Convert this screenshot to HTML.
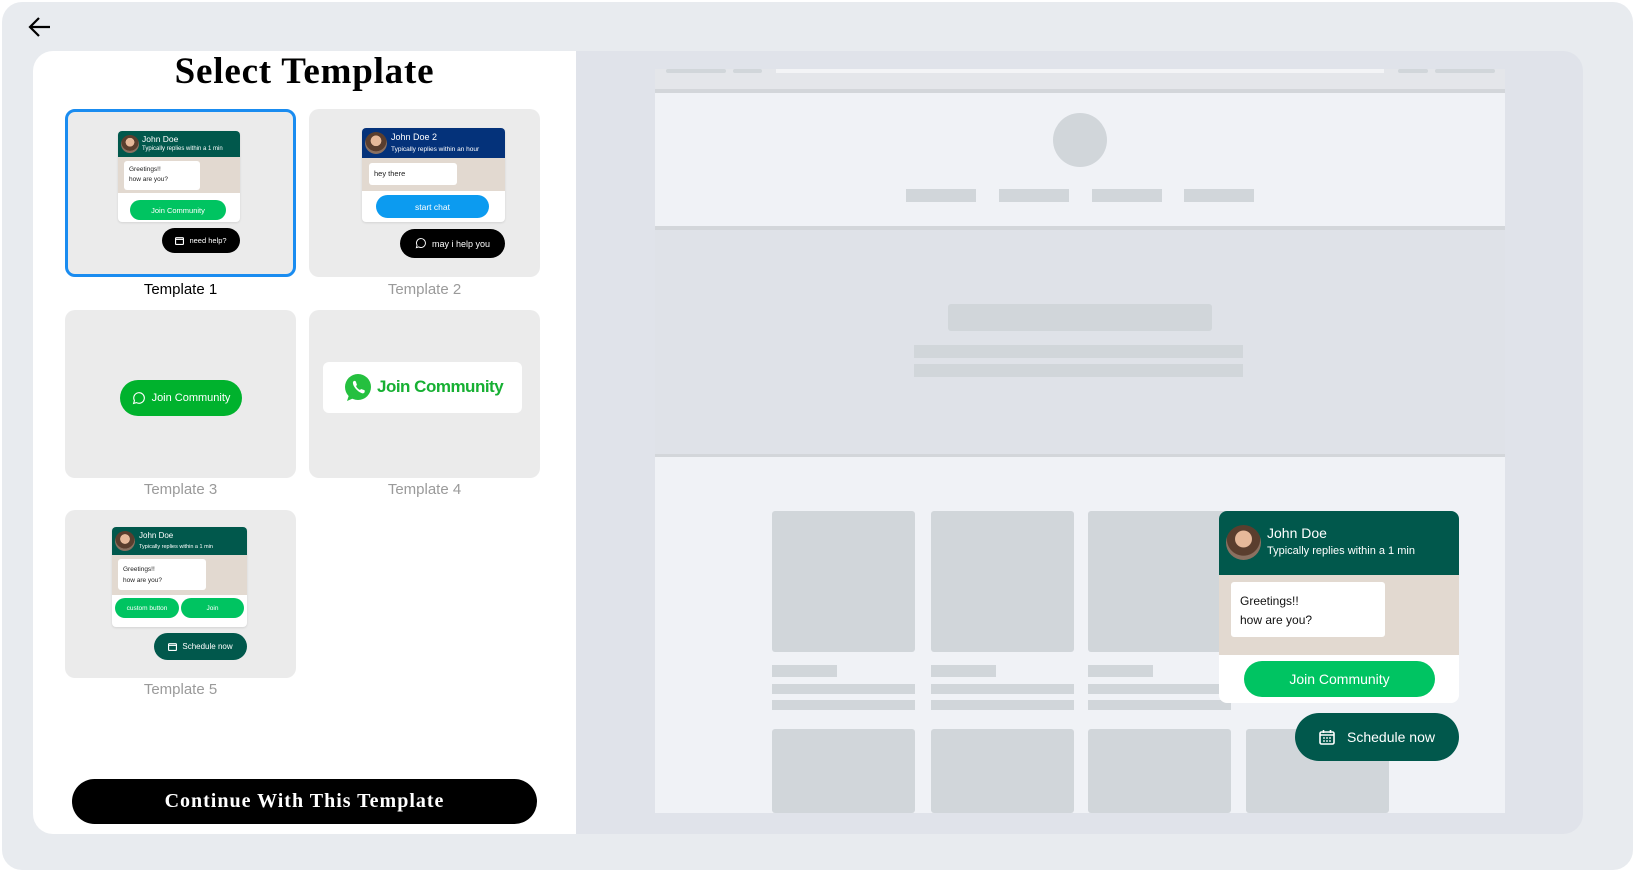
<!DOCTYPE html>
<html><head><meta charset="utf-8"><style>
*{box-sizing:border-box;margin:0;padding:0}
body{width:1635px;height:872px;background:#fff;font-family:"Liberation Sans",sans-serif;position:relative;overflow:hidden}
.a{position:absolute}
.frame{left:2px;top:2px;width:1631px;height:868px;background:#e8ebef;border-radius:20px}
.left{left:33px;top:51px;width:543px;height:783px;background:#fff;border-radius:20px 0 0 20px}
.right{left:576px;top:51px;width:1007px;height:783px;background:#e0e3ea;border-radius:0 20px 20px 0}
.title{left:33px;width:543px;top:50px;text-align:center;font-family:"Liberation Serif",serif;font-weight:bold;font-size:37px;letter-spacing:0.8px;color:#000}
.card{width:231px;height:168px;background:#ebebeb;border-radius:10px}
.sel{border:3px solid #1a8cf0}
.lbl{width:231px;text-align:center;font-size:15px;color:#9a9a9a}
.w{background:#fff;border-radius:4px;overflow:hidden;box-shadow:0 1px 2px rgba(0,0,0,.1)}
.hd{background:#01584c;color:#fff;position:relative}
.av{position:absolute;border-radius:50%;background:radial-gradient(circle at 50% 40%,#e6b99a 0 30%,#5a3e2e 32% 60%,#8a7060 62%)}
.chat{background:#e2d9d0;position:relative}
.bub{position:absolute;background:#fff;border-radius:3px;color:#222}
.pill{position:absolute;border-radius:999px;color:#fff;text-align:center;display:flex;align-items:center;justify-content:center}
.g{background:#d1d6da}
</style></head><body>
<div class="a frame"></div>
<svg class="a" style="left:27px;top:15px" width="26" height="24" viewBox="0 0 26 24"><path d="M23 12H4M12 3L3 12l9 9" fill="none" stroke="#000" stroke-width="2.2"/></svg>
<div class="a left"></div>
<div class="a right"></div>
<div class="a title">Select Template</div>

<!-- card 1 -->
<div class="a card sel" style="left:65px;top:109px"></div>
<div class="a w" style="left:118px;top:131px;width:122px;height:91px">
 <div class="hd" style="height:26px"><div class="av" style="left:3px;top:4px;width:18px;height:18px"></div>
 <div class="a" style="left:24px;top:3px;font-size:8.5px">John Doe</div><div class="a" style="left:24px;top:15px;font-size:6px">Typically replies within a 1 min</div></div>
 <div class="chat" style="height:36px"><div class="bub" style="left:6px;top:4px;width:76px;height:29px;font-size:6.5px;padding:4px 5px;line-height:10px">Greetings!!<br>how are you?</div></div>
 <div class="pill" style="left:12px;top:69px;width:96px;height:20px;background:#00c461;font-size:7.5px">Join Community</div>
</div>
<div class="a pill" style="left:162px;top:228px;width:78px;height:25px;background:#000;font-size:7.5px"><svg width="9" height="9" viewBox="0 0 16 16" style="margin-right:5px"><rect x="1" y="3" width="14" height="12" rx="1.5" fill="none" stroke="#fff" stroke-width="2"/><path d="M1 6h14" stroke="#fff" stroke-width="2"/></svg>need help?</div>
<div class="a lbl" style="left:65px;top:281px;color:#000">Template 1</div>

<!-- card 2 -->
<div class="a card" style="left:309px;top:109px"></div>
<div class="a w" style="left:362px;top:128px;width:143px;height:94px">
 <div class="hd" style="height:30px;background:#04327a"><div class="av" style="left:3px;top:4px;width:22px;height:22px"></div>
 <div class="a" style="left:29px;top:4px;font-size:9px">John Doe 2</div><div class="a" style="left:29px;top:18px;font-size:6.5px">Typically replies within an hour</div></div>
 <div class="chat" style="height:33px"><div class="bub" style="left:7px;top:5px;width:88px;height:22px;font-size:7.5px;padding:6px 5px">hey there</div></div>
 <div class="pill" style="left:14px;top:67px;width:113px;height:23px;background:#0c9bf0;font-size:8.5px">start chat</div>
</div>
<div class="a pill" style="left:400px;top:229px;width:105px;height:29px;background:#000;font-size:9px"><svg width="11" height="11" viewBox="0 0 16 16" style="margin-right:6px"><path d="M2 14l1-3.5A6.5 6.5 0 1 1 5.5 13z" fill="none" stroke="#fff" stroke-width="1.4"/></svg>may i help you</div>
<div class="a lbl" style="left:309px;top:281px">Template 2</div>

<!-- card 3 -->
<div class="a card" style="left:65px;top:310px"></div>
<div class="a pill" style="left:120px;top:380px;width:122px;height:36px;background:#00b22d;font-size:11px"><svg width="13" height="13" viewBox="0 0 16 16" style="margin-right:7px"><path d="M2 14l1-3.5A6.5 6.5 0 1 1 5.5 13z" fill="none" stroke="#fff" stroke-width="1.4"/></svg>Join Community</div>
<div class="a lbl" style="left:65px;top:481px">Template 3</div>

<!-- card 4 -->
<div class="a card" style="left:309px;top:310px"></div>
<div class="a" style="left:323px;top:362px;width:199px;height:51px;background:#fff;border-radius:6px"></div>
<svg class="a" style="left:343px;top:373px" width="30" height="30" viewBox="0 0 30 30"><circle cx="15" cy="14" r="13" fill="#25c03f"/><path d="M4 28l2-6 5 3z" fill="#25c03f"/><path d="M10 9c1-2 3-1 3 0l1 3-1 1c1 2 2 3 4 4l1-1 3 1c1 0 1 2 0 3-3 2-12-6-11-11z" fill="#fff"/></svg>
<div class="a" style="left:377px;top:377px;font-size:17px;font-weight:bold;color:#17b033;letter-spacing:-0.5px">Join Community</div>
<div class="a lbl" style="left:309px;top:481px">Template 4</div>

<!-- card 5 -->
<div class="a card" style="left:65px;top:510px"></div>
<div class="a w" style="left:112px;top:527px;width:135px;height:100px">
 <div class="hd" style="height:28px"><div class="av" style="left:3px;top:4px;width:20px;height:20px"></div>
 <div class="a" style="left:27px;top:4px;font-size:8px">John Doe</div><div class="a" style="left:27px;top:17px;font-size:5.5px">Typically replies within a 1 min</div></div>
 <div class="chat" style="height:40px"><div class="bub" style="left:6px;top:4px;width:88px;height:31px;font-size:6.5px;padding:5px 5px;line-height:11px">Greetings!!<br>how are you?</div></div>
 <div class="pill" style="left:3px;top:71px;width:64px;height:20px;background:#00c461;font-size:6.5px">custom button</div>
 <div class="pill" style="left:69px;top:71px;width:63px;height:20px;background:#00c461;font-size:6.5px">Join</div>
</div>
<div class="a pill" style="left:154px;top:633px;width:93px;height:27px;background:#01584c;font-size:8px"><svg width="9" height="9" viewBox="0 0 16 16" style="margin-right:5px"><rect x="1" y="3" width="14" height="12" rx="1.5" fill="none" stroke="#fff" stroke-width="2"/><path d="M1 6h14" stroke="#fff" stroke-width="2"/></svg>Schedule now</div>
<div class="a lbl" style="left:65px;top:681px">Template 5</div>

<div class="a pill" style="left:72px;top:779px;width:465px;height:45px;background:#000;font-family:'Liberation Serif',serif;font-weight:bold;font-size:20px;letter-spacing:1px">Continue With This Template</div>

<!-- mock page -->
<div class="a" style="left:655px;top:69px;width:850px;height:20px;background:#e4e6ea"></div>
<div class="a g" style="left:666px;top:69px;width:60px;height:4px;border-radius:2px"></div>
<div class="a g" style="left:733px;top:69px;width:29px;height:4px;border-radius:2px"></div>
<div class="a" style="left:776px;top:69px;width:608px;height:4px;background:#f3f4f6"></div>
<div class="a g" style="left:1398px;top:69px;width:30px;height:4px;border-radius:2px"></div>
<div class="a g" style="left:1435px;top:69px;width:60px;height:4px;border-radius:2px"></div>
<div class="a" style="left:655px;top:89px;width:850px;height:4px;background:#d3d6da"></div>
<div class="a" style="left:655px;top:93px;width:850px;height:133px;background:#f0f2f6"></div>
<div class="a g" style="left:1053px;top:113px;width:54px;height:54px;border-radius:50%"></div>
<div class="a g" style="left:906px;top:189px;width:70px;height:13px"></div>
<div class="a g" style="left:999px;top:189px;width:70px;height:13px"></div>
<div class="a g" style="left:1092px;top:189px;width:70px;height:13px"></div>
<div class="a g" style="left:1184px;top:189px;width:70px;height:13px"></div>
<div class="a" style="left:655px;top:226px;width:850px;height:4px;background:#d3d6da"></div>
<div class="a" style="left:655px;top:230px;width:850px;height:224px;background:#dfe2e8"></div>
<div class="a g" style="left:948px;top:304px;width:264px;height:27px;border-radius:3px"></div>
<div class="a g" style="left:914px;top:345px;width:329px;height:13px"></div>
<div class="a g" style="left:914px;top:364px;width:329px;height:13px"></div>
<div class="a" style="left:655px;top:454px;width:850px;height:3px;background:#d3d6da"></div>
<div class="a" style="left:655px;top:457px;width:850px;height:356px;background:#f0f2f6"></div>
<div class="a g" style="left:772px;top:511px;width:143px;height:141px;border-radius:3px"></div>
<div class="a g" style="left:931px;top:511px;width:143px;height:141px;border-radius:3px"></div>
<div class="a g" style="left:1088px;top:511px;width:143px;height:141px;border-radius:3px"></div>
<div class="a g" style="left:772px;top:665px;width:65px;height:12px"></div>
<div class="a g" style="left:931px;top:665px;width:65px;height:12px"></div>
<div class="a g" style="left:1088px;top:665px;width:65px;height:12px"></div>
<div class="a g" style="left:772px;top:684px;width:143px;height:10px"></div>
<div class="a g" style="left:931px;top:684px;width:143px;height:10px"></div>
<div class="a g" style="left:1088px;top:684px;width:143px;height:10px"></div>
<div class="a g" style="left:772px;top:700px;width:143px;height:10px"></div>
<div class="a g" style="left:931px;top:700px;width:143px;height:10px"></div>
<div class="a g" style="left:1088px;top:700px;width:143px;height:10px"></div>
<div class="a g" style="left:772px;top:729px;width:143px;height:84px;border-radius:3px"></div>
<div class="a g" style="left:931px;top:729px;width:143px;height:84px;border-radius:3px"></div>
<div class="a g" style="left:1088px;top:729px;width:143px;height:84px;border-radius:3px"></div>
<div class="a g" style="left:1246px;top:729px;width:143px;height:84px;border-radius:3px"></div>

<!-- big widget -->
<div class="a" style="left:1219px;top:511px;width:240px;height:192px;background:#fff;border-radius:8px;overflow:hidden">
 <div class="hd" style="height:64px"><div class="av" style="left:7px;top:14px;width:35px;height:35px"></div>
 <div class="a" style="left:48px;top:14px;font-size:14px">John Doe</div><div class="a" style="left:48px;top:34px;font-size:11px">Typically replies within a 1 min</div></div>
 <div class="chat" style="height:80px"><div class="bub" style="left:12px;top:7px;width:154px;height:55px;font-size:12px;padding:10px 9px;line-height:19px;color:#111">Greetings!!<br>how are you?</div></div>
 <div class="pill" style="left:25px;top:150px;width:191px;height:36px;background:#00c462;font-size:14px">Join Community</div>
</div>
<div class="a pill" style="left:1295px;top:713px;width:164px;height:48px;background:#01584c;font-size:14px">
<svg width="16" height="16" viewBox="0 0 16 16" style="margin-right:12px"><rect x="1" y="3" width="14" height="12" rx="1.5" fill="none" stroke="#fff" stroke-width="1.6"/><path d="M1 6h14M4.5 1v3M11.5 1v3" stroke="#fff" stroke-width="1.6"/><path d="M4 9h2M7 9h2M10 9h2M4 12h2M7 12h2M10 12h2" stroke="#fff" stroke-width="1.3"/></svg>Schedule now</div>
</body></html>
